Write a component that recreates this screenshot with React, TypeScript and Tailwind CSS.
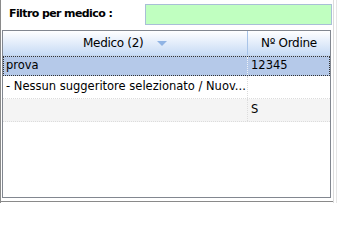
import React from "react";

const font = { fontFamily: '"DejaVu Sans", Verdana, sans-serif' };

export default function App() {
  return (
    <div
      className="w-[337px] h-[203px] bg-white relative overflow-hidden text-[11.5px] text-black"
      style={font}
    >
      {/* outer frame lines */}
      <div className="absolute left-0 top-0 bottom-0 w-px bg-[#8a8a8a]" />
      <div className="absolute left-0 right-[4px] bottom-[1px] h-px bg-[#8a8a8a]" />
      <div className="absolute top-0 bottom-0 right-[3px] w-px bg-[#dcdcdc]" />
      <div className="absolute top-0 bottom-0 right-0 w-px bg-[#e6e6e6]" />

      <div className="flex items-center h-[30px] pl-[9px] pb-[5px] pt-[4px]">
        <span className="font-bold w-[136px] text-[11px] tracking-[-0.6px]">Filtro per medico :</span>
        <div className="w-[187px] h-[21px] border border-[#a9bfd6] bg-[#c0ffc0]" />
      </div>

      <div className="ml-[2px] w-[329px] h-[168px] border border-[#828790] bg-white flex flex-col">
        {/* header */}
        <div className="flex h-[25px] bg-gradient-to-b from-[#ffffff] to-[#c7dbf5] border-b border-[#c5d5ea] text-[12px]">
          <div className="w-[245px] flex items-center relative border-r border-[#a8c4e8]">
            <span className="ml-[80px] tracking-[-0.3px]">Medico (2)</span>
            <svg
              className="absolute left-[154px] top-[10px]"
              width="10"
              height="5"
              viewBox="0 0 10 5"
            >
              <polygon points="0,0 10,0 5,5" fill="#90b4e4" />
            </svg>
          </div>
          <div className="flex-1 flex items-center pl-[13px] tracking-[-0.3px]">
            Nº Ordine
          </div>
        </div>

        {/* row 1 selected */}
        <div className="flex h-[20px] bg-[#b5c9e9] border border-dotted border-[#333]">
          <div className="w-[244px] flex items-center pl-[2px] border-r border-dotted border-[#eef2f8]">
            prova
          </div>
          <div className="flex-1 flex items-center pl-[3px]">12345</div>
        </div>

        {/* row 2 */}
        <div className="flex h-[23px] bg-white border-b border-dotted border-[#dcdcdc]">
          <div className="w-[245px] flex items-center pl-[3px] whitespace-nowrap overflow-hidden border-r border-dotted border-[#dcdcdc]">
            - Nessun suggeritore selezionato / Nuov...
          </div>
          <div className="flex-1" />
        </div>

        {/* row 3 */}
        <div className="flex h-[23px] bg-[#f4f4f4] border-b border-dotted border-[#dcdcdc]">
          <div className="w-[245px] border-r border-dotted border-[#dcdcdc]" />
          <div className="flex-1 flex items-center pl-[3px]">S</div>
        </div>
      </div>
    </div>
  );
}
